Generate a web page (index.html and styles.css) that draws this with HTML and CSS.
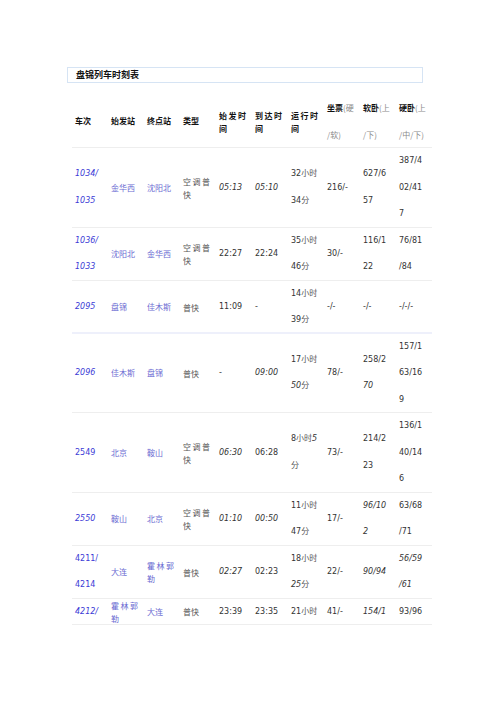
FILE: index.html
```html
<!DOCTYPE html>
<html lang="zh">
<head>
<meta charset="utf-8">
<link rel="stylesheet" href="styles.css">
</head>
<body>
<div class="page">
  <div class="title">盘锦列车时刻表</div>
  <table class="tt">
    <colgroup><col><col><col><col><col><col><col><col><col><col></colgroup>
    <thead>
      <tr>
        <th>车次</th>
        <th>始发站</th>
        <th>终点站</th>
        <th>类型</th>
        <th class="cn sp">始发时<br>间</th>
        <th class="cn sp">到达时<br>间</th>
        <th class="cn sp">运行时<br>间</th>
        <th>坐票<span class="sub">(硬<br>/软)</span></th>
        <th>软卧<span class="sub">(上<br>/下)</span></th>
        <th>硬卧<span class="sub">(上<br>/中/下)</span></th>
      </tr>
    </thead>
    <tbody>
      <tr>
        <td class="no it">1034/<br>1035</td>
        <td class="st">金华西</td>
        <td class="st">沈阳北</td>
        <td class="cn sp">空调普<br>快</td>
        <td class="it">05:13</td>
        <td class="it">05:10</td>
        <td>32<span class="zh">小时</span><br>34<span class="zh">分</span></td>
        <td>216/-</td>
        <td>627/6<br>57</td>
        <td>387/4<br>02/41<br>7</td>
      </tr>
      <tr>
        <td class="no it">1036/<br>1033</td>
        <td class="st">沈阳北</td>
        <td class="st">金华西</td>
        <td class="cn sp">空调普<br>快</td>
        <td>22:27</td>
        <td>22:24</td>
        <td>35<span class="zh">小时</span><br>46<span class="zh">分</span></td>
        <td>30/-</td>
        <td>116/1<br>22</td>
        <td>76/81<br>/84</td>
      </tr>
      <tr class="blue">
        <td class="no it">2095</td>
        <td class="st">盘锦</td>
        <td class="st">佳木斯</td>
        <td class="cn">普快</td>
        <td>11:09</td>
        <td>-</td>
        <td>14<span class="zh">小时</span><br>39<span class="zh">分</span></td>
        <td>-/-</td>
        <td>-/-</td>
        <td>-/-/-</td>
      </tr>
      <tr>
        <td class="no it">2096</td>
        <td class="st">佳木斯</td>
        <td class="st">盘锦</td>
        <td class="cn">普快</td>
        <td>-</td>
        <td class="it">09:00</td>
        <td>17<span class="zh">小时</span><br><span class="it">50</span><span class="zh">分</span></td>
        <td>78/-</td>
        <td>258/2<br><span class="it">70</span></td>
        <td>157/1<br>63/16<br>9</td>
      </tr>
      <tr>
        <td class="no">2549</td>
        <td class="st">北京</td>
        <td class="st">鞍山</td>
        <td class="cn sp">空调普<br>快</td>
        <td class="it">06:30</td>
        <td>06:28</td>
        <td>8<span class="zh">小时</span><span class="it">5</span><br><span class="zh">分</span></td>
        <td>73/-</td>
        <td>214/2<br>23</td>
        <td>136/1<br>40/14<br>6</td>
      </tr>
      <tr>
        <td class="no it">2550</td>
        <td class="st">鞍山</td>
        <td class="st">北京</td>
        <td class="cn sp">空调普<br>快</td>
        <td class="it">01:10</td>
        <td class="it">00:50</td>
        <td>11<span class="zh">小时</span><br>47<span class="zh">分</span></td>
        <td>17/-</td>
        <td class="it">96/10<br>2</td>
        <td>63/68<br>/71</td>
      </tr>
      <tr>
        <td class="no">4211/<br>4214</td>
        <td class="st">大连</td>
        <td class="st cn sp">霍林郭<br>勒</td>
        <td class="cn">普快</td>
        <td class="it">02:27</td>
        <td>02:23</td>
        <td>18<span class="zh">小时</span><br><span class="it">25</span><span class="zh">分</span></td>
        <td>22/-</td>
        <td class="it">90/94</td>
        <td class="it">56/59<br>/61</td>
      </tr>
      <tr class="last">
        <td class="no it">4212/</td>
        <td class="st cn sp">霍林郭<br>勒</td>
        <td class="st">大连</td>
        <td class="cn">普快</td>
        <td>23:39</td>
        <td>23:35</td>
        <td>21<span class="zh">小时</span></td>
        <td>41/-</td>
        <td class="it">154/1</td>
        <td>93/96</td>
      </tr>
    </tbody>
  </table>
</div>
</body>
</html>
```

FILE: styles.css
```css
html, body {
  margin: 0;
  padding: 0;
  background: #ffffff;
}

.page {
  padding: 67px 0 0 67px;
  font-family: "DejaVu Sans", "Noto Sans CJK SC", sans-serif;
  color: #333333;
}

.title {
  box-sizing: border-box;
  width: 356px;
  height: 16px;
  border: 1px solid #d6e4f4;
  padding-left: 8px;
  font-family: "Noto Sans CJK SC", sans-serif;
  font-weight: 700;
  font-size: 9px;
  line-height: 14px;
  color: #111111;
}

.tt {
  margin: 12px 0 0 5px;
  width: 360px;
  table-layout: fixed;
  border-collapse: separate;
  border-spacing: 0;
}

.tt col {
  width: 36px;
}

.tt th,
.tt td {
  padding: 0 0 0 3px;
  text-align: left;
  vertical-align: middle;
  white-space: nowrap;
  line-height: 26.5px;
  font-size: 8px;
  background: linear-gradient(#eeeeee, #eeeeee) left bottom / 100% 1px no-repeat;
}

.tt th {
  font-family: "Noto Sans CJK SC", sans-serif;
  font-weight: 700;
  color: #111111;
  font-size: 8px;
}

.tt th .sub {
  font-weight: 400;
  color: #8a8a8a;
}

.tt .cn {
  line-height: 13px;
  font-family: "Noto Sans CJK SC", sans-serif;
  color: #555555;
}

.tt th.cn {
  color: #111111;
}

.tt .sp {
  letter-spacing: 1.5px;
}

.tt .zh {
  font-family: "Noto Sans CJK SC", sans-serif;
  color: #555555;
  line-height: 8px;
}

.tt .no {
  color: #3b3bd6;
}

.tt .st {
  font-family: "Noto Sans CJK SC", sans-serif;
  color: #6b6bd2;
}

.tt .it {
  font-style: italic;
}

.tt tr.blue td {
  background: linear-gradient(#eef0fb, #eef0fb) left bottom / 100% 2px no-repeat;
}
```
